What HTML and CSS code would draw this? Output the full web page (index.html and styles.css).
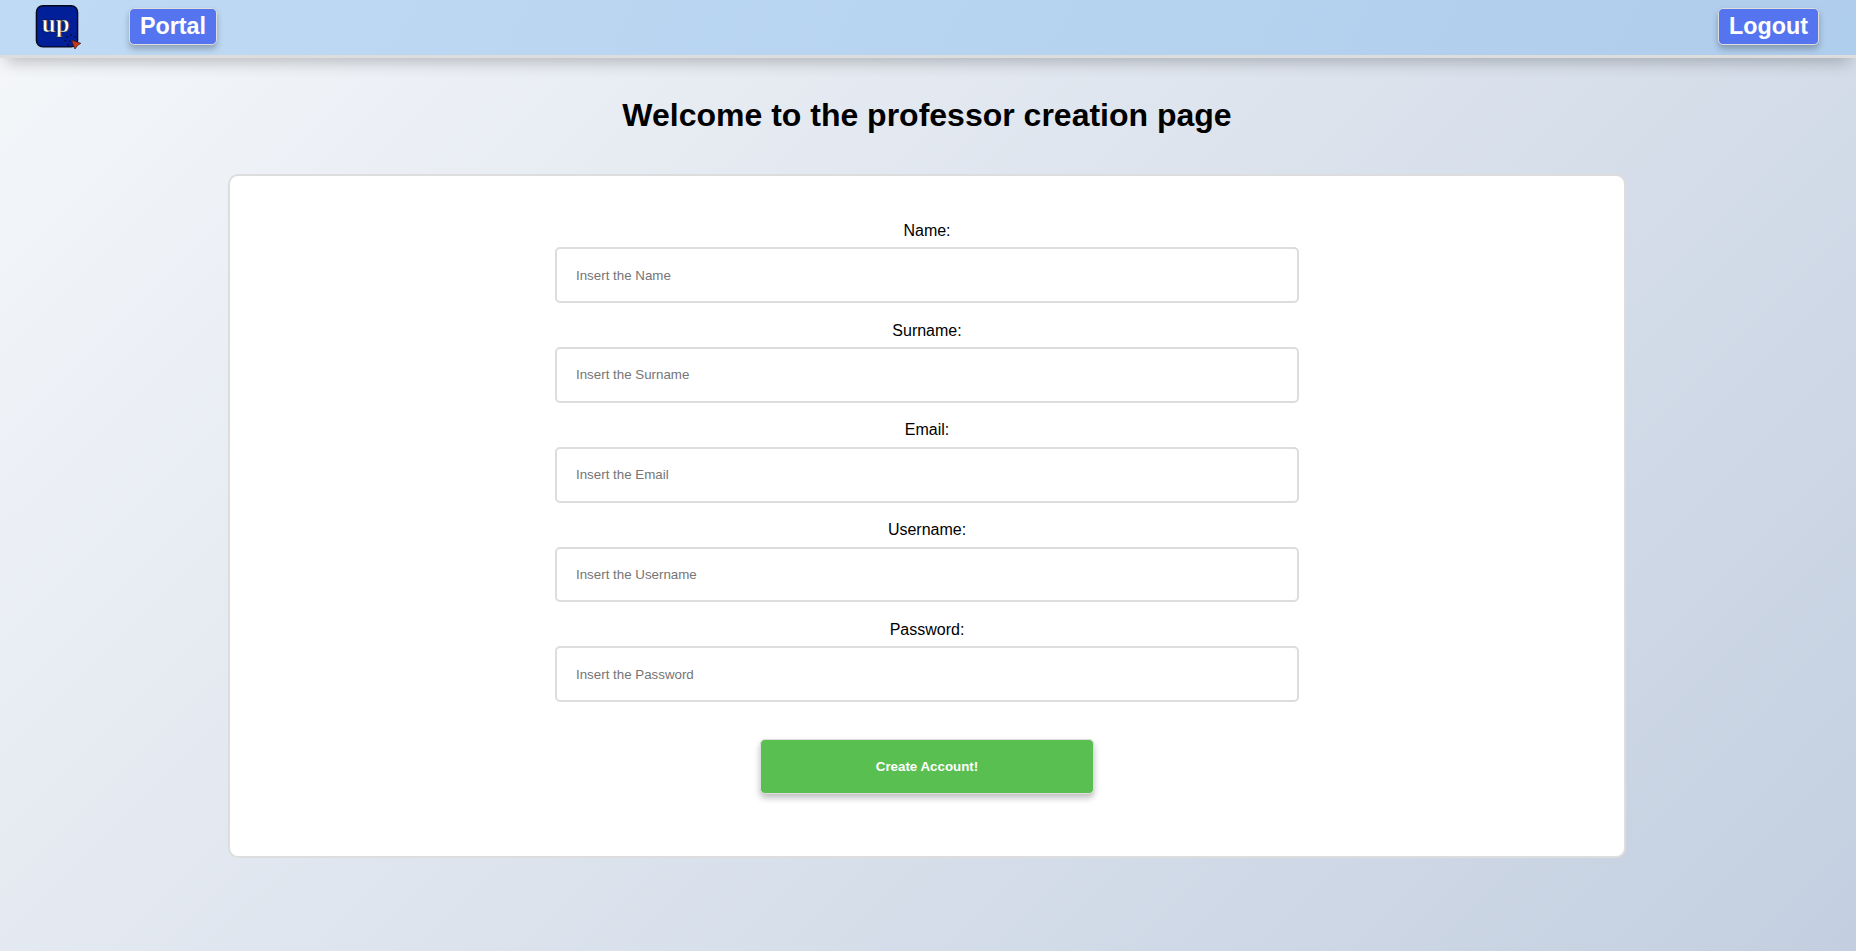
FILE: index.html
```html
<!DOCTYPE html>
<html lang="en">
<head>
<meta charset="utf-8">
<title>Professor creation</title>
<link rel="stylesheet" href="styles.css">
</head>
<body>
<header class="navbar">
  <svg class="logo" width="48" height="48" viewBox="0 0 48 48">
    <rect x="1.400" y="1.700" width="41.200" height="41.200" rx="6.500" fill="#001f99" stroke="#050a1c" stroke-width="1.400"/>
    <text class="logo-text" x="20.700" y="27.500" text-anchor="middle" textLength="28" lengthAdjust="spacingAndGlyphs">up</text>
    <g fill="#050a38"><rect x="31" y="32" width="2" height="1.5"/><rect x="35" y="30" width="1.7" height="1.7"/><rect x="39" y="32" width="1.5" height="1.5"/><rect x="29.5" y="36" width="1.7" height="1.7"/><rect x="32" y="40" width="1.7" height="1.7"/><rect x="34" y="36.500" width="1.500" height="1.500"/></g>
    <path d="M36.500 36.200L45.800 39.300L42.500 41.500L40 45L38.700 42Z" fill="#c83818" stroke="#4a1a18" stroke-width=".8"/>
  </svg>
  <a class="nav-button">Portal</a>
  <a class="nav-button nav-end">Logout</a>
</header>
<main class="page">
  <h1 class="title">Welcome to the professor creation page</h1>
  <form class="card">
    <label class="label" for="name">Name:</label>
    <input class="field" id="name" type="text" placeholder="Insert the Name">
    <label class="label" for="surname">Surname:</label>
    <input class="field" id="surname" type="text" placeholder="Insert the Surname">
    <label class="label" for="email">Email:</label>
    <input class="field" id="email" type="text" placeholder="Insert the Email">
    <label class="label" for="username">Username:</label>
    <input class="field" id="username" type="text" placeholder="Insert the Username">
    <label class="label" for="password">Password:</label>
    <input class="field" id="password" type="password" placeholder="Insert the Password">
    <button class="submit" type="button">Create Account!</button>
  </form>
</main>
</body>
</html>
```
FILE: styles.css
```css
* { box-sizing: border-box; }
body {
  margin: 0;
  min-height: 951px;
  font-family: "Liberation Sans", Arial, sans-serif;
  background: linear-gradient(135deg, #f5f7fa 0%, #c3cfe0 100%);
}
.navbar {
  display: flex;
  align-items: flex-start;
  height: 58px;
  padding: 4px 37px 0 35px;
  border-bottom: 3px solid #ddd;
  background: linear-gradient(120deg, #bfdaf4, #afcdec);
  box-shadow: 0 10px 16px -6px rgba(0, 0, 0, .24);
}
.logo { display: block; }
.logo-text {
  font: bold 25px "Liberation Serif", serif;
  fill: #fff;
  stroke: #111;
  stroke-width: .6px;
}
.nav-button {
  width: 88px;
  margin: 4px 0 0 46px;
  height: 37px;
  padding: 4px 0;
  border: 1px solid #ddd;
  border-radius: 5px;
  background: #5575f0;
  color: #fff;
  font-size: 23.3px;
  font-weight: bold;
  line-height: 27px;
  text-align: center;
  box-shadow: 0 4px 6px rgba(0, 0, 0, .25);
}
.nav-end {
  width: 101px;
  margin-left: auto;
}
.page {
  display: flex;
  flex-direction: column;
  align-items: center;
  padding-right: 2px;
}
.title {
  margin: 39px 0 40px;
  font-size: 32px;
  line-height: 37px;
}
.card {
  display: flex;
  flex-direction: column;
  align-items: center;
  width: 1398px;
  height: 684px;
  padding-top: 45.8px;
  border: 2px solid #ddd;
  border-radius: 10px;
  background: #fff;
}
.label { font-size: 16px; line-height: 18px; }
.field {
  width: 744px;
  height: 55.8px;
  margin: 7.4px 0 18.6px;
  padding: 0 19px;
  border: 2px solid #ddd;
  border-radius: 5px;
  background: #fff;
  font: 13.333px "Liberation Sans", Arial, sans-serif;
}
.field::placeholder { color: #757575; }
.submit {
  width: 334px;
  height: 55px;
  margin-top: 18px;
  border: 1px solid #ddd;
  border-radius: 5px;
  background: #58bf50;
  color: #fff;
  font: bold 13.333px "Liberation Sans", Arial, sans-serif;
  box-shadow: 0 4px 6px rgba(0, 0, 0, .25);
}
```
